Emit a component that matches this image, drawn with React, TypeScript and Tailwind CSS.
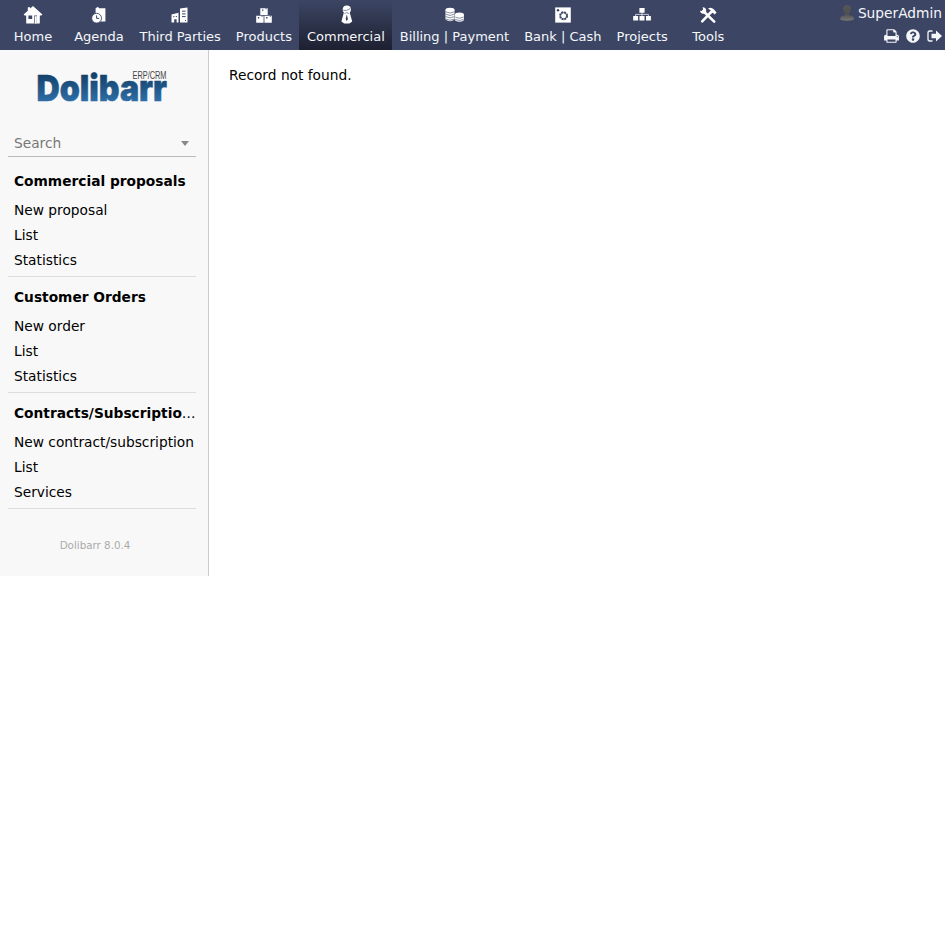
import React from "react";
import { FaQuestionCircle } from "react-icons/fa";

const icons: Record<string, React.ReactNode> = {
  Home: (
    <g>
      <path d="M10 1 19.4 9.6 18.4 10.6H16.8V18.6H3.2V10.6H1.6L.6 9.6 4.8 5.8V2.2H7.2V3.6Z" />
      <path d="M5.4 10.6h3.8v3.4H5.4zM11.2 10.6h2.8v8h-2.8z" fill="#3c4664" />
      <path d="M11.8 11.2h2v7.4h-2z" />
    </g>
  ),
  Agenda: (
    <g>
      <path d="M6.6 3.2 9 1.8 10 3.2H16.4V16.4H11L6.6 11Z" />
      <circle cx="7.6" cy="13.2" r="4.9" stroke="#3c4664" strokeWidth=".9" />
      <path d="M7.6 10.4v3h2.6" stroke="#3c4664" fill="none" />
    </g>
  ),
  "Third Parties": (
    <g>
      <path d="M1.5 9.5 8.5 7.8v9.8H6.6v-3.4H4.2v3.4H1.5zM10 3.4 17.5 2.6v15H10z" />
      <path d="M12 6.2h3.6M12 8.9h3.6M12 11.6h3.6M3.2 11.6h1.2M5.8 11.6h1.2M15 15.4h1" stroke="#3c4664" />
    </g>
  ),
  Products: (
    <g>
      <path d="M6.3 3.2h7.4v6.8H6.3zM2.2 10.8H9.6v7H2.2zM10.4 10.8h7.4v7h-7.4z" />
      <path d="M8 4.4h1.4v1.4H8zM11.6 3.2h1v1h-1zM3.9 12h1.4v1.4H3.9zM7.6 10.8h1v1h-1zM12.1 12h1.4v1.4h-1.4zM15.8 10.8h1v1h-1z" fill="#3c4664" />
    </g>
  ),
  Commercial: (
    <g transform="translate(.8 0)">
      <ellipse cx="10" cy="4.4" rx="4.1" ry="3.9" />
      <path d="M7.2 7h5.6l2.6 9.4L12.6 18.4H7.4L4.6 16.4Z" />
      <path d="M6.4 5.2Q9 6.6 13.4 3.6M7.6 8.6 10 7.6l2.4 1" stroke="#59627d" strokeWidth=".7" fill="none" />
      <path d="M10 9.6l1.1 4.4-1.1 2.2L8.9 14z" fill="#343b55" />
    </g>
  ),
  "Billing | Payment": (
    <g transform="translate(.5 0)">
      <path d="M1 4.7v9.8Q5.5 18 10 14.5V4.7z" />
      <ellipse cx="5.5" cy="4.7" rx="4.5" ry="2" />
      <path d="M10.4 9.8v5.4Q15 18.5 19.4 15.2V9.8z" />
      <ellipse cx="14.9" cy="9.8" rx="4.5" ry="2.2" />
      <path d="M1.2 6.8Q5.5 9.3 9.8 6.8M1.2 9.2Q5.5 11.7 9.8 9.2M1.2 11.6Q5.5 14.1 9.8 11.6M1.2 14Q5.5 16.5 9.8 14M10.8 12.1Q15 14.4 19 12.1M10.8 14.4Q15 16.7 19 14.4" stroke="#59627d" strokeWidth=".7" fill="none" />
    </g>
  ),
  "Bank | Cash": (
    <g>
      <path d="M2.2 2.4h15.6v15.2H2.2z" />
      <circle cx="10.6" cy="10.8" r="3.6" fill="none" stroke="#3c4664" strokeWidth="1.7" strokeDasharray="2 .83" />
      <circle cx="10.6" cy="10.8" r="3" fill="none" stroke="#3c4664" strokeWidth=".8" />
      <circle cx="5" cy="5.3" r="1.2" fill="#3c4664" />
    </g>
  ),
  Projects: (
    <g>
      <path d="M7.4 3h5.2v4.8H7.4zM1.2 11h4.9v4.4H1.2zM7.5 11h5v4.4h-5zM14 11h4.9v4.4H14z" />
      <path d="M10 7v4M3.6 11V9.4h12.8V11" fill="none" stroke="white" strokeWidth=".7" />
    </g>
  ),
  Tools: (
    <g>
      <path d="M5.5 6.2 16.2 16.6" stroke="white" strokeWidth="2.6" strokeLinecap="round" />
      <path d="M13 7.2 4.2 16.4" stroke="white" strokeWidth="2.6" strokeLinecap="round" />
      <path d="M2 5.8 3.8 6 5.2 4.2 4.5 2.3Q8.6 2.4 8.2 6.8L6 8.8Q2.6 9.2 2 5.8ZM10 3.6Q13 1.5 16 4.5L18.6 7.4 16.8 9.4 14.8 7.8 12.8 8.8 11.6 7.4 12.8 5.4Z" />
    </g>
  ),
};

function MenuItem({ name }: { name: string }) {
  const active = name === "Commercial";
  return (
    <a
      className={
        "flex h-[50px] min-w-[66px] shrink-0 flex-col items-center px-[7.5px] pt-[4.5px] text-[13px] leading-4 whitespace-nowrap text-[#f5f6fa] " +
        (active ? "bg-linear-to-b from-[#3c4664] to-[#1d2030]" : "")
      }
    >
      <svg className="h-5 w-5" viewBox="0 0 20 20" fill="white">
        {icons[name]}
      </svg>
      <span className="mt-[4.5px]">{name}</span>
    </a>
  );
}

function Logo() {
  return (
    <svg className="mt-[19px] ml-[37px] h-9 w-[132px] overflow-visible" viewBox="0 0 132 36">
      <defs>
        <linearGradient id="ink" gradientUnits="userSpaceOnUse" x1="0" y1="4" x2="0" y2="32">
          <stop offset="0" stopColor="#123e67" />
          <stop offset="1" stopColor="#2d6da5" />
        </linearGradient>
      </defs>
      <text
        x="-.5"
        y="31.5"
        textLength="130.5"
        lengthAdjust="spacingAndGlyphs"
        fill="url(#ink)"
        stroke="url(#ink)"
        strokeWidth=".5"
        strokeLinejoin="round"
        fontFamily="Inter, sans-serif"
        fontWeight="900"
        fontSize="36"
      >
        Dolibarr
      </text>
      <text x="95.5" y="10" textLength="34" lengthAdjust="spacingAndGlyphs" fill="#444" fontFamily="Liberation Sans, sans-serif" fontSize="10.2">
        ERP/CRM
      </text>
    </svg>
  );
}

const groups = [
  { title: "Commercial proposals", items: ["New proposal", "List", "Statistics"] },
  { title: "Customer Orders", items: ["New order", "List", "Statistics"] },
  { title: "Contracts/Subscriptions", items: ["New contract/subscription", "List", "Services"] },
];

export default function App() {
  return (
    <div className="min-h-[944px] bg-white font-['DejaVu_Sans',sans-serif] text-[13.76px] text-black">
      <header className="flex h-[50px] justify-between bg-[#3c4664]">
        <nav className="flex">
          {Object.keys(icons).map((name) => (
            <MenuItem key={name} name={name} />
          ))}
        </nav>
        <div className="flex flex-col items-end pr-[3px] text-[#f5f6fa]">
          <div className="flex h-[26px] items-center gap-1">
            <svg className="h-4 w-[14px]" viewBox="0 0 14 16">
              <defs>
                <linearGradient id="user" x1="0" y1="0" x2="0" y2="1">
                  <stop offset="0" stopColor="#555" />
                  <stop offset=".6" stopColor="#505050" />
                  <stop offset="1" stopColor="#777" />
                </linearGradient>
              </defs>
              <path d="M7 0C10.4 0 11.4 2 10.8 5L9.2 8.6V10l4 1.5 1 2.9Q7 17 0 14.4L1 11.5 5 10V8.6L3.2 5C2.6 2 3.6 0 7 0Z" fill="url(#user)" />
            </svg>
            <span>SuperAdmin</span>
          </div>
          <div className="flex h-[19px] items-center gap-[7px]">
            <svg className="h-4 w-[15px]" viewBox="0 0 1664 1792" fill="currentColor">
              <path d="M384 1536h896v-256h-896v256zM384 896h896v-384h-160q-40 0-68-28t-28-68v-160h-640v640zM1536 960q0-26-19-45t-45-19-45 19-19 45 19 45 45 19 45-19 19-45zM1664 960v416q0 13-9.5 22.5t-22.5 9.5h-224v160q0 40-28 68t-68 28h-960q-40 0-68-28t-28-68v-160h-224q-13 0-22.5-9.5t-9.5-22.5v-416q0-79 56.5-135.5t135.5-56.5h64v-544q0-40 28-68t68-28h672q40 0 88 20t76 48l152 152q28 28 48 76t20 88v256h64q79 0 135.5 56.5t56.5 135.5z" />
            </svg>
            <FaQuestionCircle className="h-[14px] w-[14px]" />
            <svg className="h-[14px] w-[15px]" viewBox="0 0 15 14" fill="currentColor">
              <path d="M5.5 2H2.8Q1 2 1 4v6q0 2 1.8 2h2.7" fill="none" stroke="currentColor" strokeWidth="1.3" />
              <path d="M4.5 4.8H9V1.6L15 7 9 12.4V9.2H4.5Z" />
            </svg>
          </div>
        </div>
      </header>
      <div className="flex items-start">
        <aside className="h-[526px] w-[209px] shrink-0 border-r border-[#ccc] bg-[#f8f8f8]">
          <Logo />
          <div className="mt-[25px] ml-2 flex h-[27px] w-[188px] items-center justify-between border-b border-[#bbb] px-[6px] text-[#777]">
            <span>Search</span>
            <span className="mr-px border-x-[4.5px] border-t-[5px] border-x-transparent border-t-[#888]" />
          </div>
          <div className="ml-2 w-[188px] pt-1">
            {groups.map((group) => (
              <section key={group.title} className="h-[116px] border-b border-[#ddd] pt-2 pl-[6px]">
                <div className="mb-1 truncate leading-[25px]">
                  <b>{group.title}</b>
                </div>
                {group.items.map((item) => (
                  <a key={item} className="block leading-[25px] whitespace-nowrap">
                    {item}
                  </a>
                ))}
              </section>
            ))}
          </div>
          <div className="mt-[28px] w-[190px] text-center text-[10.32px] leading-4 text-[#aaa]">Dolibarr 8.0.4</div>
        </aside>
        <main className="pt-[15px] pl-5 leading-5">Record not found.</main>
      </div>
    </div>
  );
}
